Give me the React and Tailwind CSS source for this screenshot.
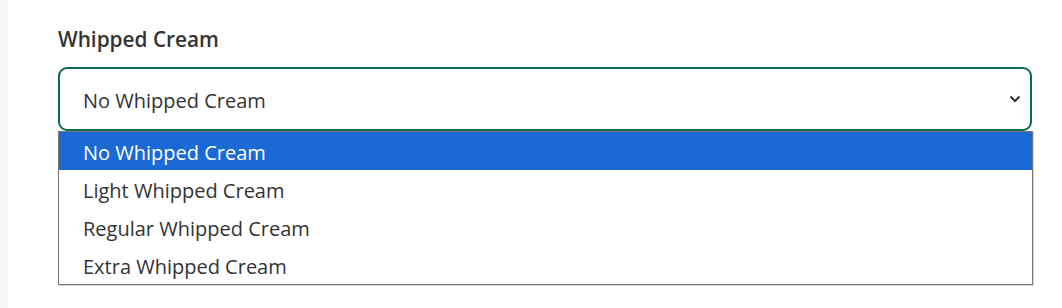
import React from "react";

const options = ["No Whipped Cream", "Light Whipped Cream", "Regular Whipped Cream", "Extra Whipped Cream"];

export default function App() {
  return (
    <div className="flex h-[308px] w-[1062px] bg-white" style={{ fontFamily: '"Open Sans", "Noto Sans", sans-serif' }}>
      <div className="w-[8px] shrink-0 bg-[#f6f6f6]" />
      <div className="relative flex-1 pl-[50px] pt-[25px]">
        <div className="text-[20.8px] font-semibold leading-[28px] text-[#333333]">Whipped Cream</div>
        <div className="mt-[14px] flex h-[64px] w-[974px] items-center justify-between rounded-[9px] border-2 border-[#0b6b4b] pl-[23px] pr-[5px]">
          <span className="pt-[3px] text-[20px] text-[#333333]">No Whipped Cream</span>
          <svg width="12" height="8" viewBox="0 0 12 8" className="mr-[4px]">
            <path d="M1.5 1.5 L6 6 L10.5 1.5" fill="none" stroke="#333333" strokeWidth="2" />
          </svg>
        </div>
        <div className="absolute left-[50px] top-[131px] w-[975px] border border-[#767676] bg-white shadow-[1px_1px_0_#d8d8d8]">
          {options.map((o, i) => (
            <div
              key={o}
              className={
                "flex h-[38px] items-center pl-[24px] pt-[3px] text-[20px] " +
                (i === 0 ? "bg-[#1a69d5] text-white" : "text-[#333333]")
              }
            >
              {o}
            </div>
          ))}
        </div>
      </div>
    </div>
  );
}
